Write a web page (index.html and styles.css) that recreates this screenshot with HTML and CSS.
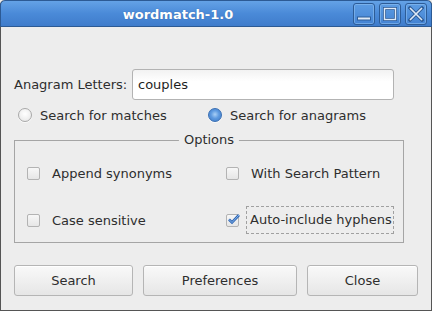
FILE: index.html
```html
<!DOCTYPE html>
<html>
<head>
<meta charset="utf-8">
<link rel="stylesheet" href="styles.css">
</head>
<body>
<div class="window">
  <div class="titlebar">
    <div class="title">wordmatch-1.0</div>
    <div class="wbtns">
      <div class="wbtn"><svg width="16" height="16" viewBox="0 0 16 16"><rect x="1.5" y="11" width="13" height="3" fill="#dfeaf7" stroke="#2d5c97" stroke-width="1"/></svg></div>
      <div class="wbtn"><svg width="16" height="16" viewBox="0 0 16 16"><rect x="2.5" y="2.5" width="11" height="11" fill="none" stroke="#2d5c97" stroke-width="3"/><rect x="2.5" y="2.5" width="11" height="11" fill="none" stroke="#dfeaf7" stroke-width="1.4"/></svg></div>
      <div class="wbtn"><svg width="16" height="16" viewBox="0 0 16 16"><path d="M2 2 L14 14 M14 2 L2 14" stroke="#2d5c97" stroke-width="3.4" stroke-linecap="square"/><path d="M2 2 L14 14 M14 2 L2 14" stroke="#dfeaf7" stroke-width="1.6"/></svg></div>
    </div>
  </div>
  <div class="content">
    <div class="entry-row">
      <span class="lbl">Anagram Letters:</span>
      <div class="entry">couples</div>
    </div>
    <div class="radio-row">
      <div class="radio-item r1"><span class="radio"></span><span>Search for matches</span></div>
      <div class="radio-item"><span class="radio on"></span><span>Search for anagrams</span></div>
    </div>
    <div class="frame">
      <span class="frame-label">Options</span>
      <div class="opts">
        <div class="opt"><span class="check"></span><span class="otext">Append synonyms</span></div>
        <div class="opt"><span class="check"></span><span class="otext">With Search Pattern</span></div>
        <div class="opt"><span class="check"></span><span class="otext">Case sensitive</span></div>
        <div class="opt"><span class="check on"><svg width="15" height="15" viewBox="0 0 15 15"><path d="M3 7.5 L6 10.5 L13 3" fill="none" stroke="#2f66b3" stroke-width="2.6"/><path d="M3 7.5 L6 10.5 L13 3" fill="none" stroke="#86b6ee" stroke-width="1"/></svg></span><span class="otext focus">Auto-include hyphens</span></div>
      </div>
    </div>
    <div class="buttons">
      <div class="btn b-search">Search</div>
      <div class="btn b-prefs">Preferences</div>
      <div class="btn b-close">Close</div>
    </div>
  </div>
</div>
</body>
</html>
```
FILE: styles.css
```css
html, body {
  margin: 0;
  padding: 0;
  background: #ededed;
}
body {
  font-family: "DejaVu Sans", sans-serif;
  font-size: 13px;
  color: #2e2e2e;
}
.window {
  width: 432px;
  height: 311px;
  box-sizing: border-box;
  border: 1px solid #555;
  border-top: none;
  border-radius: 5px 5px 0 0;
  background: #ededed;
  display: flex;
  flex-direction: column;
}
.titlebar {
  height: 27px;
  margin: 0 -1px;
  box-sizing: border-box;
  border: 1px solid #2c5a94;
  border-radius: 5px 5px 0 0;
  background: linear-gradient(#64a2e6, #4a8ad8 50%, #3f7ccb);
  display: flex;
  align-items: center;
  padding-right: 4px;
}
.title {
  flex: 1;
  text-align: center;
  color: #fff;
  font-weight: bold;
  font-size: 13px;
  padding-left: 2px;
  padding-top: 1px;
  text-shadow: 0 0 1px rgba(30,60,110,0.5);
}
.wbtns {
  display: flex;
  gap: 4px;
  margin-top: 1px;
}
.wbtn {
  width: 22px;
  height: 22px;
  box-sizing: border-box;
  border: 1px solid #2d5c97;
  border-radius: 3px;
  box-shadow: inset 0 0 0 1px rgba(140,190,240,0.6);
  background: linear-gradient(#5c9ce3, #4483d3);
  display: flex;
  align-items: center;
  justify-content: center;
}
.content {
  padding: 42px 13px 0 13px;
  display: flex;
  flex-direction: column;
}
.entry-row {
  display: flex;
  align-items: center;
  height: 31px;
  margin-right: 24px;
}
.lbl {
  width: 118px;
}
.entry {
  flex: 1;
  height: 31px;
  box-sizing: border-box;
  border: 1px solid #b3b3b3;
  border-radius: 3px;
  background: linear-gradient(#f2f2f2, #ffffff 40%);
  padding: 0 0 0 5px;
  line-height: 29px;
  color: #1e1e1e;
}
.radio-row {
  display: flex;
  align-items: center;
  height: 20px;
  margin-top: 5px;
}
.radio-item {
  display: flex;
  align-items: center;
}
.r1 {
  width: 190px;
}
.radio {
  width: 14px;
  height: 14px;
  box-sizing: border-box;
  border-radius: 50%;
  border: 1px solid #a9a9a9;
  background: radial-gradient(circle at 50% 40%, #ffffff, #e4e4e4);
  margin: 0 8px 0 4px;
  box-shadow: 0 1px 0 rgba(255,255,255,0.7);
}
.radio.on {
  border-color: #3a6fb3;
  background: radial-gradient(circle at 50% 45%, #a9cff5 0, #5e9ae0 45%, #3c78c5 100%);
}
.frame {
  position: relative;
  margin-top: 15px;
  margin-right: 14px;
  height: 103px;
  box-sizing: border-box;
  border: 1px solid #a5a5a5;
  padding: 20px 0 0 12px;
}
.frame-label {
  position: absolute;
  top: -9px;
  left: 50%;
  transform: translateX(-50%);
  background: #ededed;
  padding: 0 5px;
  line-height: 16px;
}
.opts {
  display: grid;
  grid-template-columns: 199px auto;
  grid-template-rows: 24px 24px;
  row-gap: 23px;
}
.opt {
  display: flex;
  align-items: center;
}
.check {
  width: 13px;
  height: 13px;
  box-sizing: border-box;
  border: 1px solid #b3b3b3;
  border-radius: 2px;
  background: linear-gradient(#f7f7f7, #e6e6e6);
  margin-right: 10px;
  position: relative;
  flex: none;
}
.check.on svg {
  position: absolute;
  left: -1px;
  top: -3px;
}
.otext {
  padding: 0 3px;
  margin-left: -1px;
}
.focus {
  border: 1px dashed #a0a0a0;
  height: 26px;
  line-height: 26px;
  margin-left: -3px;
  padding: 0 1px 0 3px;
}
.buttons {
  display: flex;
  gap: 10px;
  margin-top: 22px;
}
.btn {
  height: 31px;
  box-sizing: border-box;
  border: 1px solid #b5b5b5;
  border-radius: 3px;
  background: linear-gradient(#f9f9f9, #e6e6e6);
  display: flex;
  align-items: center;
  justify-content: center;
  box-shadow: inset 0 1px 0 #ffffff;
}
.b-search { width: 119px; }
.b-prefs { width: 154px; }
.b-close { width: 111px; }
```
